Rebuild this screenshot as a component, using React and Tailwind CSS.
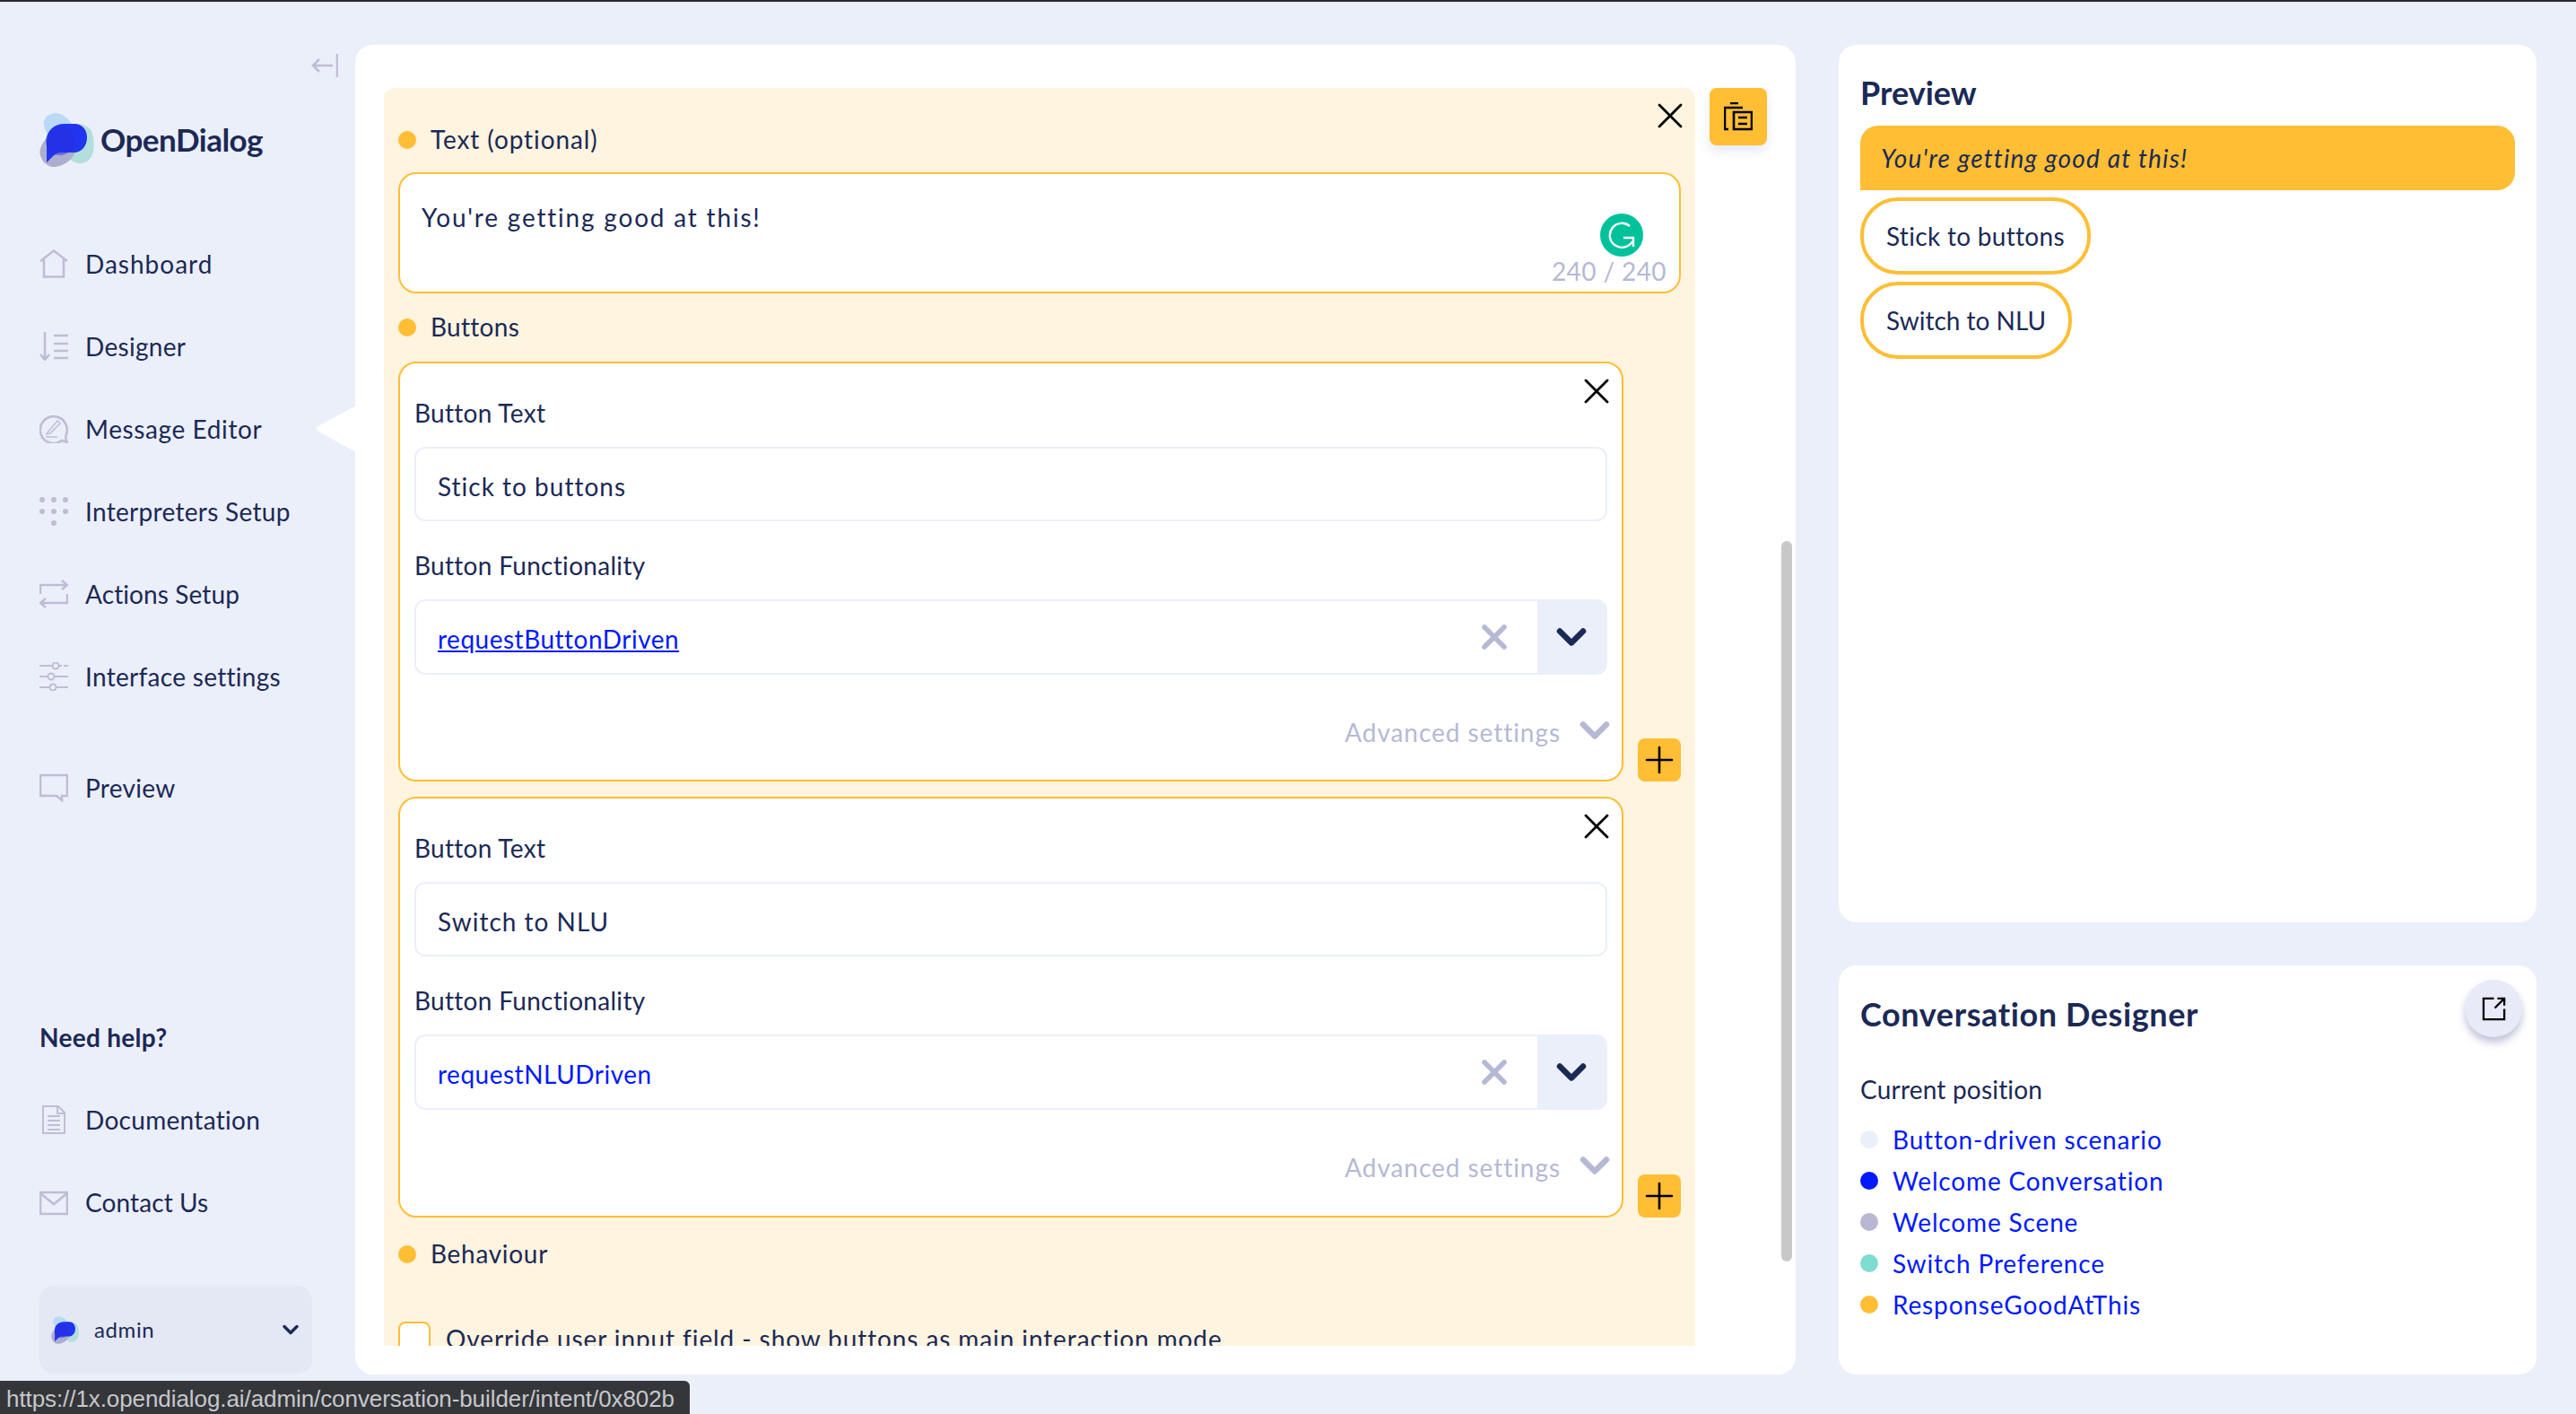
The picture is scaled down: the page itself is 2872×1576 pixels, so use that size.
import { ChevronDown, X, Plus } from 'lucide-react';

const sans = 'font-["Lato",sans-serif]';

const Logo = ({ className }) => (
  <svg viewBox="0 0 61 60" className={className}>
    <path d="M5 14C3 3 14-2 23 1c8 3 15 11 16 20 1 9-8 13-16 11C14 30 7 24 5 14z" fill="#b9d9f7" />
    <path d="M32 14c10-3 24-2 27 9 3 11 3 27-8 32-10 4-19-3-22-12-2-8-6-26 3-29z" fill="#b2dfdc" />
    <path d="M1 47c-3-9 7-22 18-26 11-3 22 5 22 16 0 12-11 21-23 23C10 61 3 55 1 47z" fill="#adadd0" />
    <path d="M8 55V31C8 19 17 12 28 12h11c9 0 14 7 14 15 0 10-6 17-15 17H24C17 44 13 51 8 55z" fill="#2135ee" />
    <circle cx="23" cy="31" r="16" fill="#2a2ee0" opacity="0.5" />
  </svg>
);

const navIconProps = { viewBox: '0 0 32 32', fill: 'none', stroke: '#bfbdd6', strokeWidth: 2.6, className: 'w-8 h-8 shrink-0' };

const HomeIcon = () => (
  <svg {...navIconProps}>
    <path d="M1 13 16 1.5 31 13M5 11v19.5h22V11" />
  </svg>
);
const DesignerIcon = () => (
  <svg {...navIconProps}>
    <path d="M6 0v30M1 25l5 6 5-6M16 4h16M16 13h16M16 21h16M16 29h16" />
  </svg>
);
const EditorIcon = () => (
  <svg {...navIconProps}>
    <path d="M31 31l-6-2a15 15 0 1 1 5-7c-1 3-1 6 1 9z" />
    <path d="M9 20 20 7l3 3-11 11-4 1zM7 25h13" strokeWidth="1.5" />
  </svg>
);
const DotsIcon = () => (
  <svg viewBox="0 0 32 32" fill="#bfbdd6" className="w-8 h-8 shrink-0">
    <circle cx="3" cy="3" r="3" />
    <circle cx="16" cy="3" r="3" />
    <circle cx="29" cy="3" r="3" />
    <circle cx="3" cy="16" r="3" />
    <circle cx="16" cy="16" r="3" />
    <circle cx="29" cy="16" r="3" />
    <circle cx="16" cy="29" r="3" />
  </svg>
);
const ActionsIcon = () => (
  <svg {...navIconProps}>
    <path d="M1 16V6h30M25 1l6 5-6 5M31 16v10H1M7 21l-6 5 6 5" />
  </svg>
);
const SlidersIcon = () => (
  <svg {...navIconProps} strokeWidth="2">
    <path d="M0 4h14M22 4h3M27 4h5M0 16h9M17 16h15M0 28h11M19 28h13" />
    <circle cx="18" cy="4" r="3.5" />
    <circle cx="13" cy="16" r="3.5" />
    <circle cx="15" cy="28" r="3.5" />
  </svg>
);
const BubbleIcon = () => (
  <svg {...navIconProps}>
    <path d="M1 2h30v23h-6v5l-6-5H1z" />
  </svg>
);
const DocIcon = () => (
  <svg {...navIconProps}>
    <path d="M4 1h17l7 7v23H4zM20 1v8h8M9 12h14M9 17h14M9 22h14M9 27h14" strokeWidth="2" />
  </svg>
);
const MailIcon = () => (
  <svg {...navIconProps}>
    <path d="M1 5h30v24H1zM1 6l15 12L31 6" />
  </svg>
);

const NavItem = ({ icon, label, tracking = 'tracking-[0.3px]', className = '' }) => (
  <div className={`flex items-center gap-[19px] h-[40px] text-[28px] text-[#1b2956] ${tracking} ${className}`}>
    {icon}
    <span>{label}</span>
  </div>
);

const Sidebar = () => (
  <aside className="w-[396px] shrink-0 pl-[44px] flex flex-col">
    <div className="h-[24px] mt-[10px] pl-[303px]">
      <svg viewBox="0 0 30 26" fill="none" stroke="#bfbdd6" strokeWidth="2.6" className="w-[30px] h-[26px]">
        <path d="M29 0v26M24 13H2M9 6l-7 7 7 7" />
      </svg>
    </div>
    <div className="flex items-center mt-[42px] h-[60px]">
      <Logo className="w-[61px] h-[60px] shrink-0" />
      <span className="ml-[7px] -mt-[2px] text-[35px] font-bold tracking-[-0.5px] text-[#1b2956]">OpenDialog</span>
    </div>
    <div className="mt-[88px] flex flex-col gap-[52px]">
      <NavItem icon={<HomeIcon />} label="Dashboard" tracking="tracking-[1px]" />
      <NavItem icon={<DesignerIcon />} label="Designer" />
      <NavItem icon={<EditorIcon />} label="Message Editor" tracking="tracking-[0.6px]" />
      <NavItem icon={<DotsIcon />} label="Interpreters Setup" />
      <NavItem icon={<ActionsIcon />} label="Actions Setup" tracking="tracking-[0.1px]" />
      <NavItem icon={<SlidersIcon />} label="Interface settings" />
      <NavItem icon={<BubbleIcon />} label="Preview" className="mt-[32px]" />
    </div>
    <div className="mt-[238px] text-[28px] font-bold tracking-[0.3px] text-[#1b2956] h-[40px] leading-[40px]">Need help?</div>
    <div className="mt-[52px] flex flex-col gap-[52px]">
      <NavItem icon={<DocIcon />} label="Documentation" />
      <NavItem icon={<MailIcon />} label="Contact Us" tracking="tracking-[0.1px]" />
    </div>
    <div className="mt-[73px] w-[304px] h-[98px] rounded-[16px] bg-[#e4e8f4] flex items-center pl-[13px] pr-[10px]">
      <Logo className="w-[31px] h-[31px] shrink-0" />
      <span className="ml-[17px] text-[24px] tracking-[0.6px] text-[#1b2956] flex-1">admin</span>
      <ChevronDown className="w-[28px] h-[28px] text-[#1b2956]" strokeWidth={3} />
    </div>
  </aside>
);

const SectionLabel = ({ children, tracking = 'tracking-[0.3px]', className = '' }) => (
  <div className={`flex items-center gap-4 h-[36px] text-[28px] text-[#1b2956] ${tracking} ${className}`}>
    <span className="w-5 h-5 rounded-full bg-[#ffbe33] shrink-0" />
    <span className="-mt-[3px]">{children}</span>
  </div>
);

const FieldLabel = ({ children, className = '' }) => (
  <div className={`h-[36px] leading-[36px] text-[28px] text-[#1b2956] tracking-[0.3px] ${className}`}>{children}</div>
);

const ButtonCard = ({ text, action, underline, height }) => (
  <div className="flex items-end">
    <div className={`relative w-[1367px] ${height} bg-white border-2 border-[#ffbe33] rounded-[20px] pl-[16px] pt-[37px]`}>
      <X className="absolute right-[4px] top-[7px] w-12 h-12 text-black" strokeWidth={1.4} />
      <FieldLabel>Button Text</FieldLabel>
      <div className="mt-[20px] w-[1330px] h-[83px] border-2 border-[#ebeffa] rounded-[12px] flex items-center pl-[24px] pt-[4px] text-[28px] text-[#1b2956] tracking-[1px]">
        {text}
      </div>
      <FieldLabel className="mt-[31px]">Button Functionality</FieldLabel>
      <div className="mt-[20px] w-[1330px] h-[84px] border-2 border-[#ebeffa] rounded-[12px] flex items-center overflow-hidden">
        <span className={`pl-[24px] pt-[4px] flex-1 text-[28px] text-[#0019ff] tracking-[0.5px] ${underline ? 'underline' : ''}`}>{action}</span>
        <X className="w-11 h-11 text-[#b5b9d5] mr-[26px]" strokeWidth={3} />
        <div className="w-[76px] h-full bg-[#ebeffa] flex items-center justify-center">
          <ChevronDown className="w-[52px] h-[52px] shrink-0 text-[#1b2956]" strokeWidth={3} />
        </div>
      </div>
      <div className="mt-[40px] w-[1330px] flex items-center justify-end text-[28px] text-[#b5b9d5] tracking-[0.95px]">
        <span>Advanced settings</span>
        <ChevronDown className="ml-[12px] -mr-[12px] -mt-[4px] w-[52px] h-[52px]" strokeWidth={3} />
      </div>
    </div>
    <div className="ml-4 w-12 h-12 rounded-[8px] bg-[#ffbe33] flex items-center justify-center">
      <Plus className="w-12 h-12 text-black" strokeWidth={1.3} />
    </div>
  </div>
);

const Grammarly = () => (
  <svg viewBox="0 0 48 48" className="absolute right-[40px] top-[44px] w-12 h-12">
    <circle cx="24" cy="24" r="24" fill="#00c29a" />
    <path d="M33 14A13.5 13.5 0 1 0 36 31M26 27h11v10" fill="none" stroke="#fff" strokeWidth="2.4" />
  </svg>
);

const Editor = () => (
  <main className="relative w-[1606px] h-[1482px] bg-white rounded-[20px] pt-[48px] pl-[32px] flex items-start shrink-0">
    <div className="relative w-[1462px] h-[1402px] overflow-hidden bg-[#fef4df] rounded-t-[12px] px-[16px] pt-[40px]">
      <X className="absolute right-[4px] top-[7px] w-12 h-12 text-black" strokeWidth={1.4} />
      <SectionLabel tracking="tracking-[0.9px]">Text (optional)</SectionLabel>
      <div className="relative mt-[18px] w-[1430px] h-[135px] bg-white border-2 border-[#ffbe33] rounded-[20px] pl-[24px] pt-[27px] text-[28px] text-[#1b2956] tracking-[1.8px]">
        You're getting good at this!
        <Grammarly />
        <span className="absolute right-[14px] bottom-[2px] text-[#b5b9d5] tracking-[0.4px]">240 / 240</span>
      </div>
      <SectionLabel className="mt-[20px]">Buttons</SectionLabel>
      <div className="mt-[20px] flex flex-col gap-[17px]">
        <ButtonCard text="Stick to buttons" action="requestButtonDriven" underline height="h-[468px]" />
        <ButtonCard text="Switch to NLU" action="requestNLUDriven" height="h-[469px]" />
      </div>
      <SectionLabel tracking="tracking-[0.7px]" className="mt-[23px]">Behaviour</SectionLabel>
      <div className="mt-[57px] flex items-start text-[28px] text-[#1b2956] tracking-[0.9px]">
        <span className="w-[36px] h-[36px] shrink-0 bg-white border-2 border-[#ffbe33] rounded-[8px]" />
        <span className="ml-[17px] -mt-[2px]">Override user input field - show buttons as main interaction mode</span>
      </div>
    </div>
    <button className="ml-4 w-16 h-16 rounded-[8px] bg-[#ffbe33] shadow-[0_6px_12px_rgba(180,190,225,0.35)] flex items-center justify-center">
      <svg viewBox="0 0 32 32" fill="none" stroke="#000" strokeWidth="2.6" className="w-8 h-8">
        <path d="M7 1h9M21 6H1v24h4M11 11h20v19H11zM16 17h10M16 24h10" />
      </svg>
    </button>
    <div className="absolute left-[1590px] top-[553px] w-[12px] h-[803px] rounded-full bg-[#c8c8c8]" />
  </main>
);

const Pill = ({ children, tracking = 'tracking-[0.3px]' }) => (
  <div className={`w-fit h-[86px] border-[4px] border-[#ffbe33] rounded-[42px] flex items-center px-[25px] text-[28px] text-[#1b2956] ${tracking}`}>
    {children}
  </div>
);

const positions = [
  ['Button-driven scenario', 'bg-[#ebeffa]'],
  ['Welcome Conversation', 'bg-[#0019ff]'],
  ['Welcome Scene', 'bg-[#b8b6d2]'],
  ['Switch Preference', 'bg-[#7edcd0]'],
  ['ResponseGoodAtThis', 'bg-[#ffbe33]'],
];

const RightColumn = () => (
  <div className="ml-[48px] w-[778px] shrink-0 flex flex-col gap-[48px]">
    <section className="h-[978px] bg-white rounded-[20px] px-[24px] pt-[33px]">
      <h2 className="h-[40px] leading-[40px] text-[36px] font-bold text-[#1b2956]">Preview</h2>
      <div className="mt-[17px] h-[72px] bg-[#ffbe33] rounded-[20px] rounded-bl-none flex items-center pl-[23px] text-[28px] italic tracking-[1.2px] text-[#1b2956]">
        You're getting good at this!
      </div>
      <div className="mt-[8px] flex flex-col gap-[8px]">
        <Pill>Stick to buttons</Pill>
        <Pill tracking="tracking-[0px]">Switch to NLU</Pill>
      </div>
    </section>
    <section className="relative h-[456px] bg-white rounded-[20px] px-[24px] pt-[34px]">
      <h2 className="h-[40px] leading-[40px] text-[36px] font-bold tracking-[0.6px] text-[#1b2956]">Conversation Designer</h2>
      <button className="absolute right-[16px] top-[16px] w-16 h-16 rounded-full bg-[#e8ebf7] shadow-[0_6px_8px_rgba(120,125,170,0.45)] flex items-center justify-center">
        <svg viewBox="0 0 28 28" fill="none" stroke="#000" strokeWidth="2.4" className="w-[27px] h-[27px]">
          <path d="M14 2H2v24h24V14M15 13 26 2M18 2h8v8" />
        </svg>
      </button>
      <div className="mt-[46px] h-[36px] leading-[36px] text-[28px] tracking-[0.2px] text-[#1b2956]">Current position</div>
      <ul className="mt-[20px] flex flex-col gap-[10px]">
        {positions.map(([label, color]) => (
          <li key={label} className="flex items-center h-[36px] text-[28px] text-[#0019ff] tracking-[0.85px]">
            <span className={`w-5 h-5 rounded-full shrink-0 ${color}`} />
            <span className="ml-[16px]">{label}</span>
          </li>
        ))}
      </ul>
    </section>
  </div>
);

export default function App() {
  return (
    <div className={`relative w-[2872px] h-[1576px] overflow-hidden bg-[#ebeffa] ${sans}`}>
      <div className="h-[2px] bg-[#2b2b2d]" />
      <div className="flex pt-[48px]">
        <Sidebar />
        <Editor />
        <RightColumn />
      </div>
      {/* active page marker, sits over the sidebar edge */}
      <svg viewBox="0 0 44 52" className="absolute left-[353px] top-[452px] w-[44px] h-[52px]">
        <path d="M44 0 2 23q-4 3 0 6l42 23z" fill="#fff" />
      </svg>
      {/* browser link status bubble */}
      <div className='absolute left-0 bottom-0 w-[769px] h-[37px] bg-[#35363a] rounded-tr-[6px] pl-[7px] pt-[4px] flex items-center text-[26px] tracking-[-0.08px] text-[#c6c8cb] font-["Liberation_Sans",sans-serif]'>
        https://1x.opendialog.ai/admin/conversation-builder/intent/0x802b
      </div>
    </div>
  );
}
